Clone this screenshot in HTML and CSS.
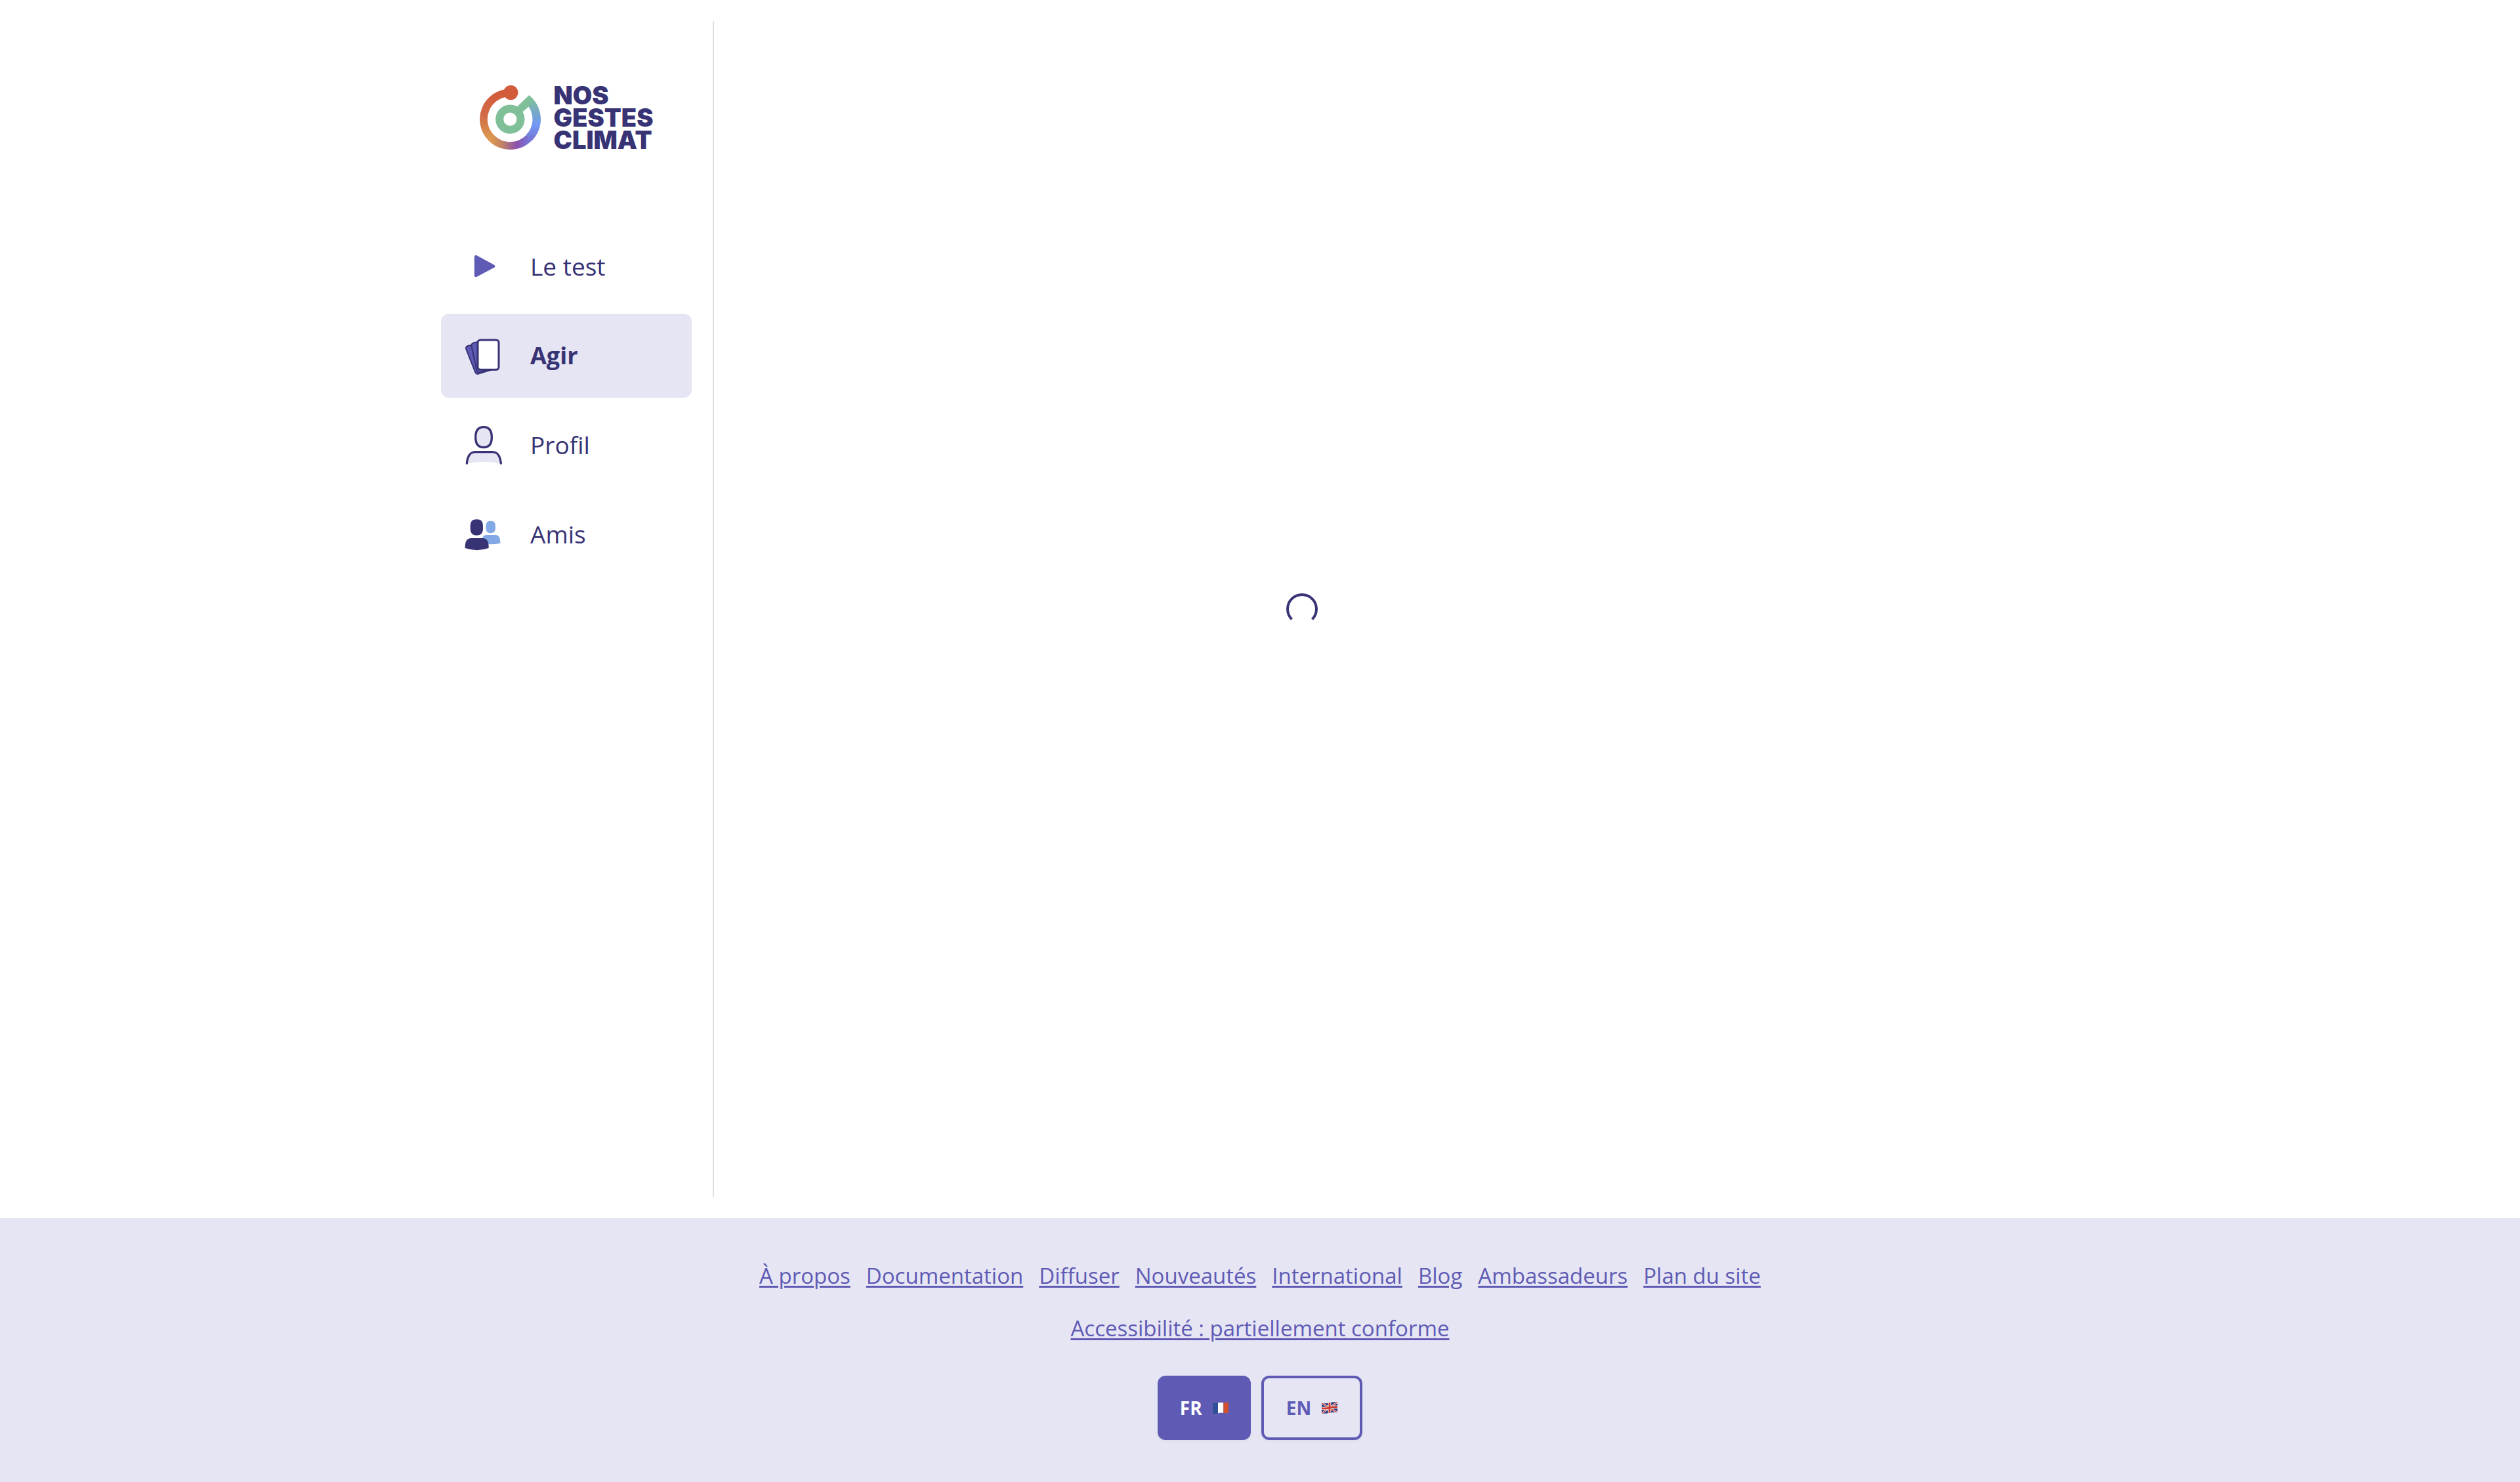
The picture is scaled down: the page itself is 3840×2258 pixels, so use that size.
FILE: index.html
```html
<!DOCTYPE html>
<html lang="fr">
<head>
<meta charset="utf-8">
<title>Nos Gestes Climat</title>
<meta name="viewport" content="width=device-width, initial-scale=1">
<link rel="stylesheet" href="styles.css">
</head>
<body>
<div class="layout">
  <aside class="sidebar">
    <a class="logo" href="#">
      <svg class="logo-mark" viewBox="0 0 277 295" aria-hidden="true">
        <defs>
          <linearGradient id="warm" gradientUnits="userSpaceOnUse" x1="0" y1="34" x2="0" y2="240">
            <stop offset="0" stop-color="#d25b3c"/><stop offset=".5" stop-color="#d26c46"/><stop offset="1" stop-color="#dd9850"/>
          </linearGradient>
          <linearGradient id="base" gradientUnits="userSpaceOnUse" x1="53" y1="0" x2="223" y2="0">
            <stop offset="0" stop-color="#dd9850"/><stop offset=".3" stop-color="#c08068"/><stop offset=".68" stop-color="#8c52ae"/><stop offset="1" stop-color="#7676d6"/>
          </linearGradient>
          <linearGradient id="cool" gradientUnits="userSpaceOnUse" x1="0" y1="245" x2="0" y2="60">
            <stop offset="0" stop-color="#7676d6"/><stop offset=".36" stop-color="#7399f5"/><stop offset=".6" stop-color="#74a5d0"/><stop offset="1" stop-color="#80c099"/>
          </linearGradient>
        </defs>
        <path d="M138 34A120 120 0 0 0 53 239" fill="none" stroke="url(#warm)" stroke-width="35"/>
        <path d="M52 238A120 120 0 0 0 224 238" fill="none" stroke="url(#base)" stroke-width="35"/>
        <path d="M224 45A138 138 0 0 1 236 252L210 226A102 102 0 0 0 222 97Z" fill="url(#cool)"/>
        <path d="M224 45L170 97L195 121L223 96L232 72Z" fill="#80c099"/>
        <circle cx="138" cy="154" r="48" fill="none" stroke="#80c099" stroke-width="36"/>
        <circle cx="141" cy="33" r="33" fill="#d25b3c"/>
      </svg>
      <span class="logo-name">NOS<br>GESTES<br>CLIMAT</span>
    </a>
    <nav class="menu" aria-label="Navigation principale">
      <a class="menu-item" href="#">
        <svg class="menu-icon" viewBox="0 0 192 192" aria-hidden="true"><path d="M64 52V137L143 95Z" fill="#5f5bb5" stroke="#5f5bb5" stroke-width="15" stroke-linejoin="round"/></svg>
        Le test
      </a>
      <a class="menu-item active" href="#" aria-current="page">
        <svg class="menu-icon" viewBox="0 0 192 192" aria-hidden="true">
          <g fill="#5f5bb5" stroke="#373375" stroke-width="6">
            <path d="M26 51L84 38L142 158L75 179Q65 182 60 170L20 69Q14 56 26 51Z"/>
            <path d="M54 37L90 30L142 158L82 171Q71 174 67 162L44 55Q41 40 54 37Z"/>
          </g>
          <rect x="72" y="24" width="96" height="136" rx="12" fill="#fff" stroke="#373375" stroke-width="9"/>
        </svg>
        Agir
      </a>
      <a class="menu-item" href="#">
        <svg class="menu-icon" viewBox="0 0 192 192" aria-hidden="true">
          <g fill="#e6e5f4" stroke="#373375" stroke-width="10">
            <path d="M99 14C122 14 136 26 136 61C136 94 122 107 99 107C76 107 62 94 62 61C62 26 76 14 99 14Z"/>
            <path d="M22 180C26 138 42 128 62 128H138C158 128 174 138 178 180Q100 166 22 180Z" stroke="none"/>
            <path d="M22 180C26 138 42 128 62 128H138C158 128 174 138 178 180" fill="none" stroke-linecap="round"/>
          </g>
        </svg>
        Profil
      </a>
      <a class="menu-item" href="#">
        <svg class="menu-icon" viewBox="0 0 192 192" aria-hidden="true">
          <g fill="#82a9e6">
            <path d="M131 35C146 35 153 42 153 61V66C153 84 144 91 131 91C118 91 109 84 109 66V61C109 42 116 35 131 35Z"/>
            <path d="M90 137C91 112 97 99 112 99H153C168 99 175 111 175 137Q132 147 90 137Z"/>
          </g>
          <g fill="#373375">
            <path d="M67 28C87 28 96 37 96 60V68C96 91 86 101 67 101C48 101 38 91 38 68V60C38 37 47 28 67 28Z"/>
            <path d="M14 159C13 130 22 114 42 114H94C114 114 123 130 122 159Q68 179 14 159Z"/>
          </g>
        </svg>
        Amis
      </a>
    </nav>
  </aside>
  <main class="content">
    <div class="spinner" role="status" aria-label="Chargement"></div>
  </main>
</div>
<footer class="footer">
  <nav class="footer-links" aria-label="Pied de page">
    <a href="#">À propos</a>
    <a href="#">Documentation</a>
    <a href="#">Diffuser</a>
    <a href="#">Nouveautés</a>
    <a href="#">International</a>
    <a href="#">Blog</a>
    <a href="#">Ambassadeurs</a>
    <a href="#">Plan du site</a>
  </nav>
  <a href="#">Accessibilité : partiellement conforme</a>
  <div class="languages">
    <button class="language selected" type="button">FR
      <svg class="flag" viewBox="0 0 72 54" aria-hidden="true">
        <path d="M0 4Q12 7 24 4V52Q12 55 0 53Z" fill="#2f4f96"/>
        <path d="M24 4Q36 0 49 4V50Q36 48 24 52Z" fill="#fff"/>
        <path d="M49 4Q61 4 72 0V49Q61 54 49 50Z" fill="#d2502f"/>
      </svg>
    </button>
    <button class="language" type="button">EN
      <svg class="flag" viewBox="0 0 72 54" aria-hidden="true">
        <clipPath id="wave"><path d="M0 5Q18 9 36 4T72 1V48Q54 46 36 50T0 53Z"/></clipPath>
        <g clip-path="url(#wave)">
          <path d="M0 0H72V54H0Z" fill="#22327d"/>
          <path d="M0 5L72 49M0 53L72 1" stroke="#fff" stroke-width="8"/>
          <path d="M0 5L72 49M0 53L72 1" stroke="#c93a34" stroke-width="4"/>
          <path d="M36 0V54M0 29Q18 32 36 27T72 24" fill="none" stroke="#fff" stroke-width="14"/>
          <path d="M36 0V54M0 29Q18 32 36 27T72 24" fill="none" stroke="#c93a34" stroke-width="9"/>
        </g>
      </svg>
    </button>
  </div>
</footer>
</body>
</html>
```
FILE: styles.css
```css
* {
  box-sizing: border-box;
}

body {
  display: flex;
  flex-direction: column;
  min-height: 100vh;
  margin: 0;
  background: #fff;
  color: #373375;
  font-family: "Open Sans", "Noto Sans", sans-serif;
  font-size: 37px;
  line-height: 48px;
}

.layout {
  display: flex;
  flex: 1;
  width: 100%;
  max-width: 2560px;
  margin: 0 auto;
}

.sidebar {
  flex: none;
  width: 448px;
  margin: 32px 0;
  padding: 0 32px;
  border-right: 2px solid #e0e1da;
}

.logo {
  display: flex;
  justify-content: center;
  align-items: center;
  gap: 20px;
  padding: 96px 0 112px;
  color: #373375;
  text-decoration: none;
}

.logo-mark {
  width: 93px;
  height: 99px;
}

.logo-name {
  font-family: Inter, sans-serif;
  font-size: 38px;
  font-weight: 900;
  line-height: 34px;
}

.menu {
  display: flex;
  flex-direction: column;
  gap: 8px;
}

.menu-item {
  display: flex;
  align-items: center;
  gap: 40px;
  height: 128px;
  padding: 0 32px;
  border-radius: 12px;
  color: #373375;
  text-decoration: none;
}

.menu-item.active {
  background: #e6e5f4;
  font-size: 36px;
  font-weight: 700;
}

.menu-icon {
  width: 64px;
  height: 64px;
}

.content {
  display: flex;
  flex: 0 1 1792px;
  justify-content: center;
  align-items: center;
}

.spinner {
  width: 48px;
  height: 48px;
  border: 4px solid #373375;
  border-bottom-color: transparent;
  border-radius: 50%;
}

.footer {
  display: flex;
  flex-direction: column;
  align-items: center;
  gap: 32px;
  padding: 64px 32px;
  background: #e6e5f4;
  font-size: 33px;
}

.footer a {
  color: #5f5bb5;
  text-decoration-thickness: 3px;
  text-underline-offset: 3px;
}

.footer-links {
  display: flex;
  flex-wrap: wrap;
  justify-content: center;
  gap: 24px;
}

.languages {
  display: flex;
  gap: 16px;
  padding-top: 16px;
}

.language {
  display: flex;
  align-items: center;
  gap: 16px;
  height: 98px;
  padding: 0 34px;
  border: 4px solid #5f5bb5;
  border-radius: 12px;
  background: transparent;
  box-shadow: 0 2px 4px rgb(0 0 0 / 4%);
  color: #5f5bb5;
  font-family: inherit;
  font-size: 28px;
  font-weight: 700;
  cursor: pointer;
}

.language.selected {
  border: 0;
  background: #5f5bb5;
  color: #fff;
}

.flag {
  width: 24px;
  height: 18px;
}
```
